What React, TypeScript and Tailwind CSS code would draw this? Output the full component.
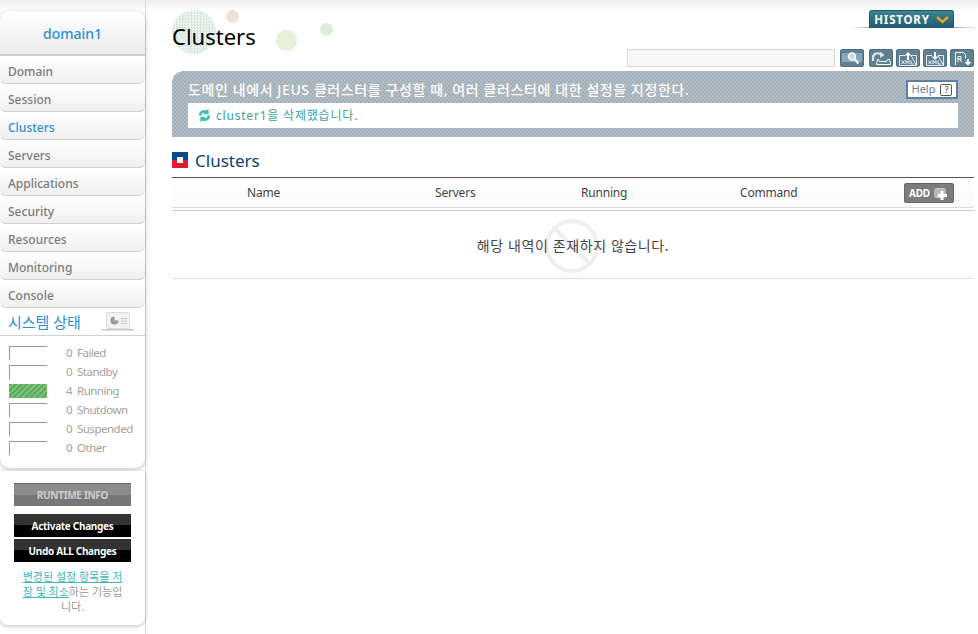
import React from 'react';

const font = '[font-family:"Noto_Sans","Noto_Sans_CJK_KR",sans-serif]';

const navItems = ['Domain', 'Session', 'Clusters', 'Servers', 'Applications', 'Security', 'Resources', 'Monitoring', 'Console'];

const statusRows = [
  { count: 0, label: 'Failed' },
  { count: 0, label: 'Standby' },
  { count: 4, label: 'Running' },
  { count: 0, label: 'Shutdown' },
  { count: 0, label: 'Suspended' },
  { count: 0, label: 'Other' },
];

const ToolButton = ({ children }: { children: React.ReactNode }) => (
  <div className="h-[18px] w-[24px] rounded-[2px] border border-[#4f7084] bg-[#5f7f92] flex items-center justify-center">
    {children}
  </div>
);

const XmlIcon = ({ down }: { down?: boolean }) => (
  <svg width="20" height="15" viewBox="0 0 20 15">
    <path d="M1.5 14.5V4.5H7M13 4.5h5.5v10z" fill="none" stroke="#e6edf1" />
    <path d="M1.5 14.5h17" stroke="#e6edf1" />
    <path d={down ? 'M10 9L6.5 5.5H9V1h2v4.5h2.5z' : 'M10 1l3.5 3.5H11V9H9V4.5H6.5z'} fill="#fff" />
    <path d="M3.5 9.5l3 3.5M6.5 9.5l-3 3.5M8 13V9.5l1.5 2 1.5-2V13M13 9.5V13h3" fill="none" stroke="#fff" strokeWidth="0.9" />
  </svg>
);

export default function App() {
  return (
    <div className={`relative flex h-[634px] overflow-hidden bg-white ${font}`}>
      <div className="absolute left-0 right-0 top-0 h-[10px] bg-gradient-to-b from-[#ececec] to-white" />

      {/* sidebar */}
      <aside className="relative w-[146px] shrink-0 pt-[11px] border-r border-[#dcdcdc]">
        <div className="rounded-[10px] bg-white shadow-[0_1px_5px_rgba(0,0,0,0.25)] h-[457px] w-[145px]">
          <div className="h-[45px] pt-[2px] rounded-t-[10px] bg-gradient-to-b from-white to-[#ececec] border-b-[2px] border-[#cfcfcf] flex items-center justify-center text-[14px] font-medium text-[#2a8fd6]">
            domain1
          </div>
          {navItems.map(item => (
            <div
              key={item}
              className={`h-[28px] pl-[8px] pt-[6px] rounded-b-[6px] border-b border-[#cfcfcf] bg-gradient-to-b from-white to-[#f0f0f0] text-[12px] leading-[20px] font-medium ${item === 'Clusters' ? 'text-[#2a8fd6]' : 'text-[#7b7b7b]'}`}
            >
              {item}
            </div>
          ))}
          <div className="h-[28px] flex items-center justify-between border-b border-[#d0d0d0] pl-[8px] pr-[10px]">
            <span className="pt-[2px] text-[15px] text-[#2a8fd6]">시스템 상태</span>
            <svg width="34" height="22" viewBox="0 0 34 22">
              <rect x="5.5" y="1.5" width="23" height="16" rx="1" fill="#f2f2f2" stroke="#dcdcdc" />
              <path d="M1 18h32v1.5H1z" fill="#c8c8c8" />
              <path d="M13.5 5.5a4 4 0 1 0 4 4h-4z" fill="#9a9a9a" />
              <path d="M20 7.5h6M20 10h6M20 12.5h6" stroke="#c8c8c8" />
            </svg>
          </div>
          <div className="pt-[8px] pl-[9px]">
            {statusRows.map(row => (
              <div key={row.label} className="h-[19px] flex items-start text-[11.5px] leading-[18px] tracking-[-0.5px] text-[#a8a09a]">
                <div
                  className={`mt-[2px] w-[38px] h-[14px] ${row.count > 0 ? 'bg-[repeating-linear-gradient(135deg,#5cae5c_0px,#5cae5c_2px,#7cc07c_2px,#7cc07c_4px)]' : 'border-l border-t border-[#999]'}`}
                />
                <span className="ml-[19px] w-[11px]">{row.count}</span>
                <span>{row.label}</span>
              </div>
            ))}
          </div>
        </div>

        <div className="mt-[3px] h-[154px] w-[145px] rounded-b-[8px] bg-white shadow-[0_1px_4px_rgba(0,0,0,0.25)] pt-[12px] flex flex-col items-center">
          <div className="w-[117px] h-[23px] bg-[linear-gradient(#8c8c8c_50%,#777_50%)] border-t border-[#666] flex items-center justify-center text-[10px] tracking-[-0.3px] font-bold text-[#ccc]">
            RUNTIME INFO
          </div>
          <div className="mt-[8px] pt-[1px] w-[117px] h-[23px] bg-[linear-gradient(#333_50%,#000_50%)] flex items-center justify-center text-[10px] tracking-[-0.3px] font-bold text-white">
            Activate Changes
          </div>
          <div className="mt-[2px] pt-[1px] w-[117px] h-[23px] bg-[linear-gradient(#333_50%,#000_50%)] flex items-center justify-center text-[10px] tracking-[-0.3px] font-bold text-white">
            Undo ALL Changes
          </div>
          <p className="mt-[7px] w-[108px] text-center text-[11px] leading-[15px] text-[#999]">
            <span className="underline text-[#3cb8bd]">변경된 설정 항목을 저장 및 최소</span>하는 기능입니다.
          </p>
        </div>
      </aside>

      {/* main */}
      <main className="relative flex-1 pl-[26px] pr-[4px]">
        <div className="relative h-[71px]">
          <div className="absolute left-0 top-[10px] h-[44px] w-[44px] rounded-full bg-[#eef4ee] bg-[repeating-conic-gradient(#d6e6d8_0%_25%,#f4f8f4_0%_50%)] bg-[length:3px_3px]" />
          <div className="absolute left-[54px] top-[10px] h-[13px] w-[13px] rounded-full bg-[#f0e2d8]" />
          <div className="absolute left-[104px] top-[30px] h-[21px] w-[21px] rounded-full bg-[#e8f0d8]" />
          <div className="absolute left-[148px] top-[23px] h-[13px] w-[13px] rounded-full bg-[#d8f0d8]" />
          <h1 className="absolute left-0 top-[18px] text-[22px] leading-[36px] text-black">Clusters</h1>

          <div className="absolute right-[-4px] top-[27px] h-[1px] w-[127px] bg-[linear-gradient(90deg,#fff,#8fbcc4_15%,#8fbcc4_85%,#fff)]" />
          <div className="absolute right-[20px] top-[10px] flex h-[18px] w-[85px] items-center justify-center gap-[6px] rounded-t-[3px] border border-[#1d5a6c] border-b-0 bg-gradient-to-b from-[#3d8496] to-[#1f5b6e] text-[11.5px] font-bold tracking-[0.8px] text-white">
            HISTORY
            <svg width="13" height="8" viewBox="0 0 13 8"><path d="M1 1l5.5 5L12 1" fill="none" stroke="#f0a020" strokeWidth="2.4" /></svg>
          </div>

          <div className="absolute right-0 top-[49px] flex items-center gap-[3px]">
            <div className="mr-[2px] h-[18px] w-[208px] border border-[#d8d8d8] bg-[#f8f8f8]" />
            <div className="mr-[2px]">
              <ToolButton>
                <svg width="22" height="14" viewBox="0 0 22 14">
                  <rect x="1" y="2" width="20" height="9" fill="#88a8ba" />
                  <circle cx="11" cy="5.5" r="3.5" fill="#c8dce8" stroke="#fff" strokeWidth="1.4" />
                  <path d="M13.5 8l4 4.5" stroke="#fff" strokeWidth="2.2" />
                </svg>
              </ToolButton>
            </div>
            <ToolButton>
              <svg width="22" height="15" viewBox="0 0 22 15">
                <path d="M3 10V7a4.5 4.5 0 0 1 8-3" fill="none" stroke="#dde4e8" strokeWidth="2.2" />
                <path d="M10 0.5l4.5 3.5-4.5 3z" fill="#dde4e8" />
                <path d="M6.5 13.5h14l-1-5h-2l-1 2h-7l-1-2h-1z" fill="#5f7f92" stroke="#fff" />
              </svg>
            </ToolButton>
            <ToolButton><XmlIcon /></ToolButton>
            <ToolButton><XmlIcon down /></ToolButton>
            <ToolButton>
              <svg width="20" height="15" viewBox="0 0 20 15">
                <path d="M3.5 14V1.5h8l2 2v4" fill="none" stroke="#fff" />
                <path d="M6 11V5.5h3v2.7H6M8 8.2L9.5 11" fill="none" stroke="#fff" />
                <path d="M16 14.5L12.5 11H15V8h2v3h2.5z" fill="#fff" />
              </svg>
            </ToolButton>
          </div>
        </div>

        {/* banner */}
        <div className="relative h-[66px] rounded-tl-[12px] bg-[#a9b5be] bg-[repeating-conic-gradient(#a2aeb8_0%_25%,#b4bec6_0%_50%)] bg-[length:4px_4px] pt-[9px]">
          <div className="pl-[16px] text-[14px] leading-[20px] tracking-[0.6px] font-medium text-white">
            도메인 내에서 JEUS 클러스터를 구성할 때, 여러 클러스터에 대한 설정을 지정한다.
          </div>
          <div className="mx-[16px] mt-[3px] flex h-[25px] items-center bg-white pl-[10px] text-[12px] tracking-[0.8px] text-[#3aa39a]">
            <svg width="13" height="13" viewBox="0 0 24 24" fill="none" stroke="#3cc0b0" strokeWidth="5">
              <path d="M4 12a8 8 0 0 1 14-5M20 12a8 8 0 0 1-14 5" />
              <path d="M18 1v7h-7M6 23v-7h7" strokeWidth="3" />
            </svg>
            <span className="ml-[5px]">cluster1을 삭제했습니다.</span>
          </div>
          <div className="absolute right-[16px] top-[9px] flex h-[19px] w-[52px] items-center justify-center gap-[5px] border-[2px] border-[#5f7f9f] bg-white text-[11px] text-[#6a7f9a]">
            Help
            <span className="flex h-[12px] w-[12px] items-center justify-center rounded-[2px] border border-[#555] text-[9px] leading-none text-[#444]">?</span>
          </div>
        </div>

        {/* section */}
        <div className="mt-[15px] flex h-[25px] items-start gap-[7px]">
          <div className="relative h-[16px] w-[16px] bg-[linear-gradient(#0a4a8e_50%,#e01b2c_50%)]">
            <div className="absolute left-[5px] top-[5px] h-[6px] w-[6px] bg-white" />
          </div>
          <h2 className="-mt-[1px] text-[17px] leading-[20px] text-[#0a3f78]">Clusters</h2>
        </div>

        <div className="border-t border-[#555]">
          <div className="relative flex h-[30px] items-center border-b border-[#ddd] bg-gradient-to-b from-white to-[#fafafa] text-[12px] tracking-[-0.2px] text-[#444]">
            <span className="absolute left-[75px]">Name</span>
            <span className="absolute left-[263px]">Servers</span>
            <span className="absolute left-[409px]">Running</span>
            <span className="absolute left-[568px]">Command</span>
            <div className="absolute left-[732px] top-[5px] flex h-[20px] w-[50px] items-center justify-center gap-[2px] rounded-[2px] border border-[#666] bg-[#7c7c7c] text-[10px] font-bold text-white">
              ADD
              <svg width="17" height="15" viewBox="0 0 17 15">
                <rect x="2" y="2" width="12" height="10" rx="3" fill="#cfcfcf" />
                <path d="M1 4h14M1 6h14M1 8h14M1 10h14" stroke="#8a8a8a" strokeWidth="0.7" />
                <path d="M10 5v9M6 9.5h9" stroke="#fff" strokeWidth="3" />
              </svg>
            </div>
          </div>
          <div className="relative mt-[2px] flex h-[69px] items-center justify-center border-y border-[#ccc] border-b-[#ddd] text-[14px] tracking-[0.6px] text-[#444]">
            <svg className="absolute left-[373px] top-[8px]" width="54" height="54" viewBox="0 0 54 54" fill="none" stroke="#efefef" strokeWidth="4">
              <circle cx="27" cy="27" r="25" />
              <path d="M10 10l34 34" />
            </svg>
            <span className="relative pt-[2px]">해당 내역이 존재하지 않습니다.</span>
          </div>
        </div>
      </main>
    </div>
  );
}
